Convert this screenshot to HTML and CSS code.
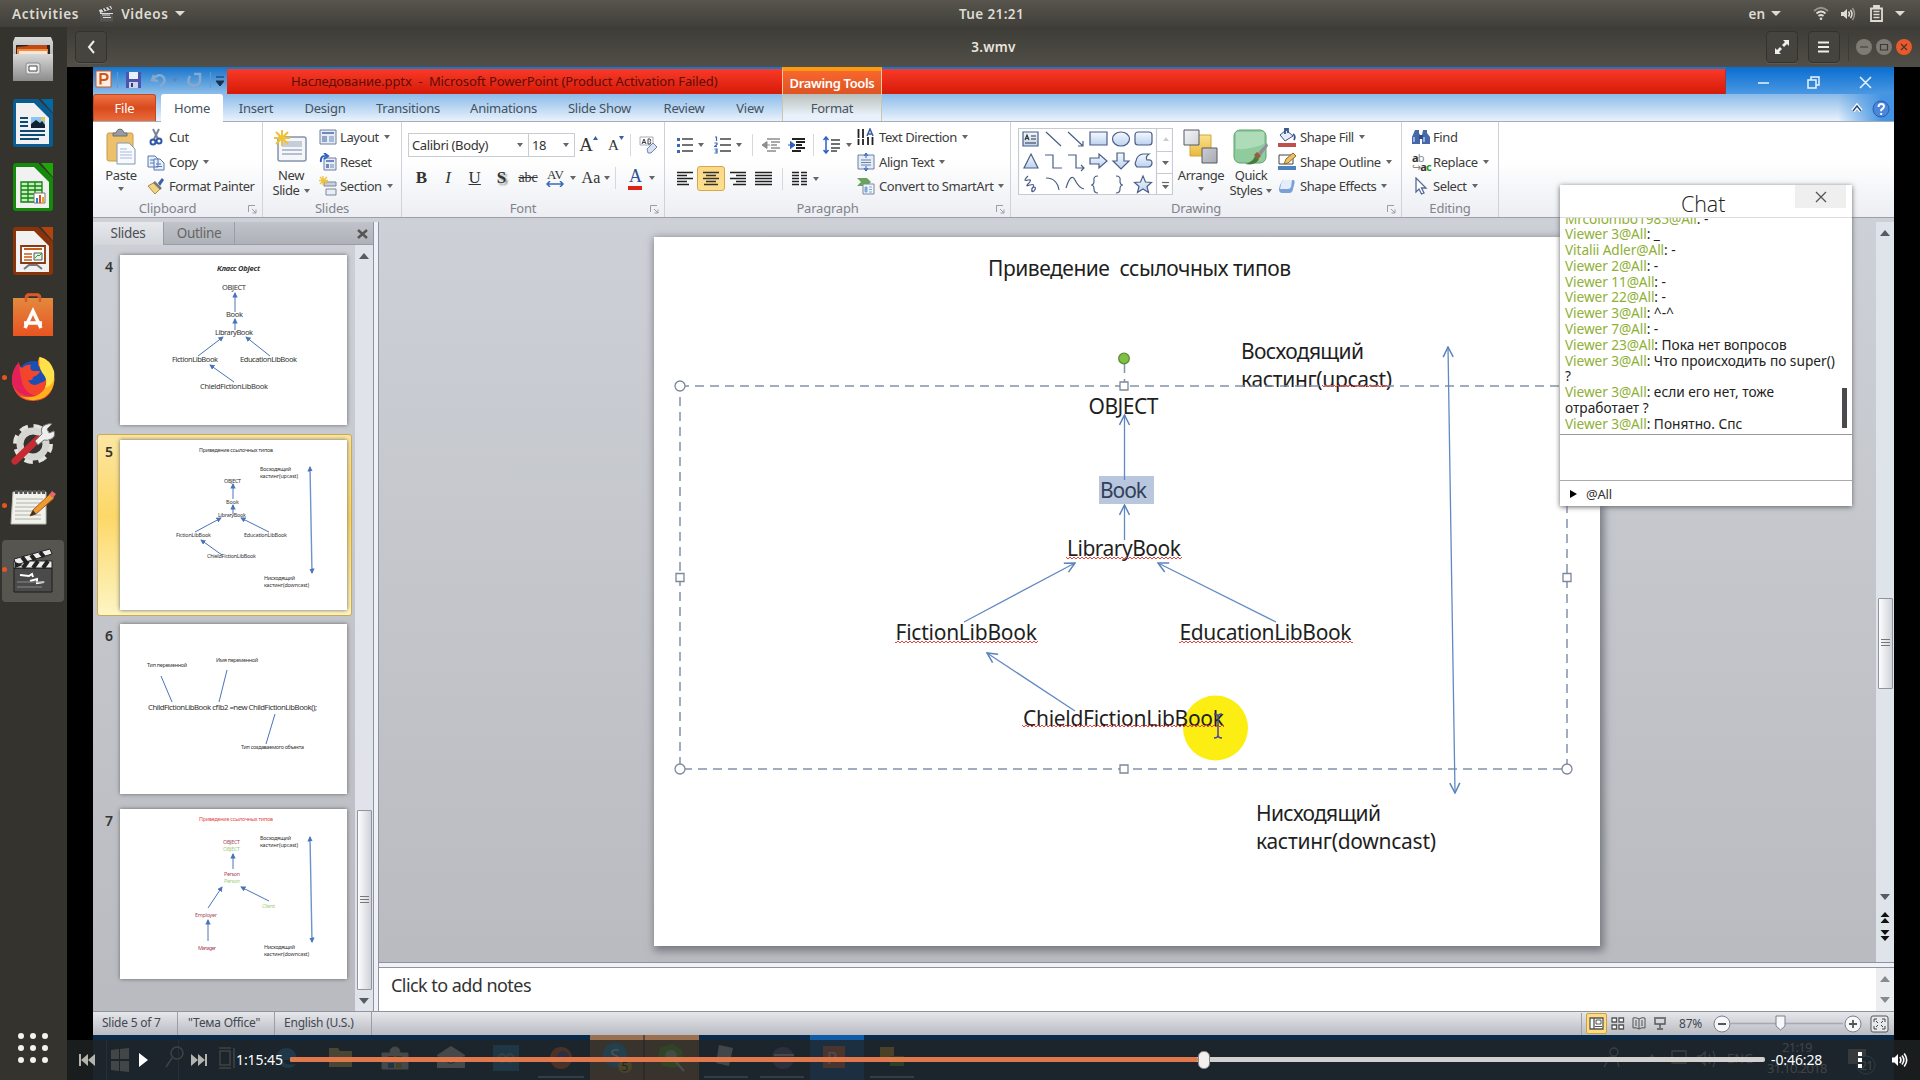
FILE: index.html
```html
<!DOCTYPE html>
<html lang="en">
<head>
<meta charset="utf-8">
<title>3.wmv</title>
<link rel="stylesheet" href="styles.css">
</head>
<body>
<svg class="defs" aria-hidden="true">
  <defs>
    <marker id="open" viewBox="0 0 14 12" refX="13" refY="6" markerWidth="14" markerHeight="12" markerUnits="userSpaceOnUse" orient="auto-start-reverse"><path d="M3 1L13 6L3 11" fill="none" stroke="#5b83bd" stroke-width="1.5"/></marker>
    <marker id="solid" viewBox="0 0 6 6" refX="5" refY="3" markerWidth="5.4" markerHeight="5.4" markerUnits="userSpaceOnUse" orient="auto-start-reverse"><path d="M0 0L6 3L0 6z" fill="#4a74b8"/></marker>
    <pattern id="wave" width="4" height="4" patternUnits="userSpaceOnUse"><path d="M0 3L2 1L4 3" fill="none" stroke="#e8433c" stroke-width="1"/></pattern>
    <linearGradient id="gy" x2="0" y2="1"><stop stop-color="#fae28f"/><stop offset="1" stop-color="#e9b93e"/></linearGradient>
    <linearGradient id="gs" x2="1" y2="1"><stop stop-color="#f4f5f8"/><stop offset="1" stop-color="#a9abb3"/></linearGradient>
    <linearGradient id="gb" x2="0" y2="1"><stop stop-color="#f5f9fe"/><stop offset="1" stop-color="#bcd2f0"/></linearGradient>
    <linearGradient id="gm" x2="0" y2="1"><stop stop-color="#d8d8d8"/><stop offset="1" stop-color="#8c8c8c"/></linearGradient>
    <linearGradient id="go" x2="0" y2="1"><stop stop-color="#e2893f"/><stop offset="1" stop-color="#e95420"/></linearGradient>
  </defs>
</svg>

<header class="topbar">
  <div class="topbar-left"><span class="activities">Activities</span>
    <svg width="15" height="16" viewBox="0 0 15 16"><path d="M0 4L12 0l1 3L1 7z" fill="#ddd"/><path d="M3 2.5l2 3M6 2l2 2M9.500 1l2 2" stroke="#333" stroke-width="1.300"/><path d="M1 7h13v8.500H1z" fill="#555"/><path d="M3 9h8M4 11.500h8M1 7.500h13" stroke="#ddd"/></svg>
    <span>Videos</span><i class="caret light"></i></div>
  <div class="clock">Tue 21:21</div>
  <div class="topbar-right"><span>en</span><i class="caret light"></i>
    <svg class="wifi" width="16" height="15" viewBox="0 0 16 15" fill="none" stroke="#dfdbd2" stroke-width="1.800"><path d="M1 5Q8-1.500 15 5" opacity=".5"/><path d="M3.500 7.500Q8 3.500 12.500 7.500"/><path d="M5.500 10Q8 8 10.500 10"/><circle cx="8" cy="12.800" r="1.300" fill="#dfdbd2" stroke="none"/></svg>
    <svg class="vol" width="16" height="14" viewBox="0 0 16 14" fill="none" stroke="#dfdbd2" stroke-width="1.500"><path d="M1 5h2.500L7 2v10L3.500 9H1z" fill="#dfdbd2" stroke="none"/><path d="M8.500 4.500q2 2.500 0 5M10.500 3q3 4 0 8"/><path d="M12.500 1q4 6 0 12" opacity=".5"/></svg>
    <svg class="bat" width="13" height="17" viewBox="0 0 13 17"><path d="M1 3.500h11v12.500H1zM4 1h5v2H4z" fill="none" stroke="#dfdbd2" stroke-width="1.800"/><path d="M3.500 6.500h6M3.500 9.500h6M3.500 12.500h6" stroke="#dfdbd2" stroke-width="1.600"/></svg>
    <i class="caret light"></i></div>
</header>

<div class="session">
  <nav class="dock">
    <div class="app"><svg width="42" height="46" viewBox="0 0 42 46"><path d="M3 1h36l2 5v38H1V6z" fill="url(#gm)"/><path d="M4 9h34v12H4z" fill="#2c2622"/><path d="M5 11l10-1 2-1h18v12H5z" fill="#c04a14"/><path d="M5 13h31v8H5z" fill="#f08a3c"/><path d="M7 15h28v5H7z" fill="#f6e6d6"/><path d="M1 18h40v27H1z" fill="url(#gm)"/><rect x="14" y="27" width="14" height="11" rx="2" fill="#e4e4e4" stroke="#888"/><path d="M17 30h8v5h-8z" fill="#fff" stroke="#444"/></svg></div>
    <div class="app"><svg width="42" height="50" viewBox="0 0 42 50"><path d="M4 1h22l15 15v30q0 3-3 3H4q-3 0-3-3V4q0-3 3-3z" fill="#0a5d92"/><path d="M4 5h18l15 15v26H4z" fill="#f1f1f1"/><path d="M29 1h12v14z" fill="#0369a3"/><path d="M8 20h8M8 24h8M8 28h8M8 33h25M8 37h25M8 41h19" stroke="#0c4a74" stroke-width="2"/><path d="M19 19h14v11H19z" fill="#8cc6ef"/><path d="M19 30v-4l5-4 4 3 2-2 3 4v3z" fill="#123"/><circle cx="31" cy="21" r="2" fill="#f6c545"/></svg></div>
    <div class="app"><svg width="42" height="50" viewBox="0 0 42 50"><path d="M4 1h22l15 15v30q0 3-3 3H4q-3 0-3-3V4q0-3 3-3z" fill="#138a0a"/><path d="M4 5h18l15 15v26H4z" fill="#f1f1f1"/><path d="M29 1h12v14z" fill="#1fa50a"/><path d="M9 20h21v20H9zM9 24h21M9 28h21M9 32h21M9 36h21M16 20v20M23 20v20" fill="#c5eec0" stroke="#12800c" stroke-width="1.300"/><path d="M22 31h11v10H22z" fill="#fff" stroke="#777"/><path d="M24 36h2v5h-2z" fill="#2a80c8"/><path d="M27 33h2v8h-2z" fill="#e04e16"/><path d="M30 35h2v6h-2z" fill="#f1a21e"/></svg></div>
    <div class="app"><svg width="42" height="50" viewBox="0 0 42 50"><path d="M4 1h22l15 15v30q0 3-3 3H4q-3 0-3-3V4q0-3 3-3z" fill="#8a3208"/><path d="M4 5h18l15 15v26H4z" fill="#f1f1f1"/><path d="M29 1h12v14z" fill="#b3430e"/><path d="M9 20h24v17H9z" fill="#fff" stroke="#8a3a10" stroke-width="1.800"/><path d="M12 23h18" stroke="#c85a1e" stroke-width="2"/><path d="M12 28h8M12 31h8M12 34h8" stroke="#c85a1e" stroke-width="1.500"/><path d="M22 27h8v7h-8z" fill="#e4f4e4" stroke="#555"/><path d="M23 32l3-3 1 1 3-3" stroke="#3a9a2a" fill="none"/><path d="M12 43l5-4h8l5 4" stroke="#777" fill="none" stroke-width="2"/></svg></div>
    <div class="app"><svg width="42" height="44" viewBox="0 0 42 44"><path d="M15 8V4q0-3 3-3h6q3 0 3 3v4" fill="none" stroke="#c4491b" stroke-width="3"/><path d="M1 5h40v38H1z" fill="url(#go)"/><path d="M14 9V4q0-2 3-2h8q3 0 3 2v5" fill="none" stroke="#d95a28" stroke-width="2.500"/><path d="M13 35l8-17 8 17M12 30h18" fill="none" stroke="#fff" stroke-width="3.500"/></svg></div>
    <div class="app running"><svg width="44" height="46" viewBox="0 0 44 46"><circle cx="23" cy="23" r="18" fill="#1a4fb4"/><path d="M27 4q8-4 10 3 8 8 6 20-3 17-20 18Q5 45 1 27 0 15 8 6q0 5 3 6 4-4 9-3-2 5 2 6h7q-1 4-7 6 0 4-5 3 4 8 12 3 8-2 8-9-5-8-10-8z" fill="#f2452c"/><path d="M28 1q9 1 14 14 5 16-8 26Q22 48 9 40q14 4 23-5 6-8 2-15-8-8-6-19z" fill="#ffb21e"/><path d="M29 1q10 2 14 14 2 14-9 17 3-8-1-13-6-8-4-18z" fill="#ffe14a"/><path d="M1 27Q0 15 8 6q0 8 2 15 2 16 15 19-18 2-24-13z" fill="#e3205a"/></svg></div>
    <div class="app"><svg width="44" height="46" viewBox="0 0 44 46"><circle cx="22" cy="24" r="17" fill="none" stroke="#e2e2de" stroke-width="6" stroke-dasharray="8 5.350"/><circle cx="22" cy="24" r="13" fill="none" stroke="#d5d5d2" stroke-width="7"/><path d="M4 41L27 19" stroke="#c62b31" stroke-width="7" stroke-linecap="round"/><path d="M24 21l7-7q-2-7 3-9 4-2 7-1l-5 5 2 4 5-2q2 6-3 8-4 2-7 1l-6 5z" fill="#eee" stroke="#777"/></svg></div>
    <div class="app running"><svg width="46" height="38" viewBox="0 0 46 38"><path d="M3 4h33v32H1z" fill="#f2f2ec" stroke="#b9b9b0"/><path d="M5 4h30" stroke="#555" stroke-width="4" stroke-dasharray="3 1.500"/><path d="M6 11h27M6 15h27M5 19h25M5 23h20M5 27h26M5 31h26" stroke="#b0b0aa"/><path d="M20 28l3-6L40 6l4 4-18 16z" fill="#ef9a33" stroke="#a86018"/><path d="M39 7l3-4 4 3-3 4z" fill="#e06868"/><path d="M20 28l3-6 3 4z" fill="#333"/></svg></div>
    <div class="app running active"><svg width="42" height="46" viewBox="0 0 42 46"><path d="M2 20h38v24H2z" fill="#4a4a4a" stroke="#1d1d1d"/><path d="M2 13h38v7H2z" fill="#eee" stroke="#222"/><path d="M2 11L38 1l2 5L4 17z" fill="#eee" stroke="#222"/><path d="M10 9l4 5M19 7l4 5M28 4l4 5M11 20l5-7M21 20l5-7M31 20l5-7" stroke="#222" stroke-width="4"/><path d="M3 14l8 3-8 3z" fill="#222"/><path d="M8 27l9 1 3-2 1 3M18 33l7-2v4l7-1" stroke="#fff" stroke-width="2" fill="none"/><path d="M5 34h28M5 39h25" stroke="#888"/></svg></div>
    <svg class="apps" width="32" height="32" viewBox="0 0 32 32" fill="#f3f3f1"><circle cx="4" cy="4" r="3"/><circle cx="16" cy="4" r="3"/><circle cx="28" cy="4" r="3"/><circle cx="4" cy="16" r="3"/><circle cx="16" cy="16" r="3"/><circle cx="28" cy="16" r="3"/><circle cx="4" cy="28" r="3"/><circle cx="16" cy="28" r="3"/><circle cx="28" cy="28" r="3"/></svg>
  </nav>

  <main class="player">
    <div class="headerbar">
      <div class="hb-side"><button class="hb-btn"><svg width="10" height="14" viewBox="0 0 10 14"><path d="M8 1L3 7l5 6" fill="none" stroke="#eee" stroke-width="2"/></svg></button></div>
      <h1>3.wmv</h1>
      <div class="hb-side end">
        <button class="hb-btn"><svg width="16" height="16" viewBox="0 0 16 16"><path d="M9 1h6v6l-2-2-3 3-2-2 3-3zM1 9l2 2 3-3 2 2-3 3 2 2H1z" fill="#eee"/></svg></button>
        <button class="hb-btn"><svg width="12" height="12" viewBox="0 0 12 12"><path d="M0 1.500h11M0 6h11M0 10.500h11" stroke="#eee" stroke-width="2.200"/></svg></button>
        <i class="hb-sep"></i>
        <svg width="56" height="18" viewBox="0 0 56 18"><circle cx="8" cy="9" r="8" fill="#7d7b74"/><circle cx="28" cy="9" r="8" fill="#7d7b74"/><circle cx="48" cy="9" r="8" fill="#e9592b"/><path d="M4 9h8M24.500 6.500h7v5.500h-7zM45 6l6 6M51 6l-6 6" fill="none" stroke="#3a3934" stroke-width="1.200"/></svg>
      </div>
    </div>

    <div class="video">
      <div class="ppt">
        <div class="titlebar">
          <div class="qat">
            <svg width="134" height="27" viewBox="0 0 134 27"><path d="M3 4h15v16H3z" fill="#fbeee4" stroke="#c85a28"/><path d="M7.500 17.500V7H11q3.500 0 3.500 3T11 13H8" fill="none" stroke="#d0561e" stroke-width="2.200"/><path d="M24.500 5v16M117.500 5v16" stroke="#5f9ad6"/><path d="M33 5h15v16H33z" fill="#4c55ad"/><path d="M36 5h9v7h-9z" fill="#e9f0fb"/><path d="M36 15h9v6h-9z" fill="#cfd2e6"/><path d="M38 16h2v4h-2z" fill="#333a80"/><path d="M61 8l-2 5 6 1M60 12q7-7 11-1 2 5-4 8" fill="none" stroke="#86a9cf" stroke-width="2.500"/><path d="M79 11h6l-3 4z" fill="#5b87b8"/><path d="M97 9q-4 7 1 9 8 2 9-4V7h-6" fill="none" stroke="#86a9cf" stroke-width="2.500"/><path d="M123 10h8M123 14h8l-4 5z" fill="#173050" stroke="#173050"/></svg>
          </div>
          <div class="redbar"><span class="wintitle">Наследование.pptx &nbsp;- &nbsp;Microsoft PowerPoint (Product Activation Failed)</span><span class="context">Drawing Tools</span></div>
          <div class="winctl"><svg width="168" height="27" viewBox="0 0 168 27" fill="none" stroke="#eaf4ff" stroke-width="1.500"><path d="M32 16h11M82 13h8v8h-8zM85 13v-3h8v8h-3M134 10l11 11M145 10l-11 11"/></svg></div>
        </div>
        <div class="tabs">
          <span class="tab file">File</span><span class="tab home">Home</span><span class="tab t3">Insert</span><span class="tab t4">Design</span><span class="tab t5">Transitions</span><span class="tab t6">Animations</span><span class="tab t7">Slide Show</span><span class="tab t8">Review</span><span class="tab t9">View</span><span class="tab format">Format</span>
          <svg class="help" width="44" height="24" viewBox="0 0 44 24"><path d="M3 15l4-5 4 5" fill="none" stroke="#fff" stroke-width="4"/><path d="M3 15l4-5 4 5" fill="none" stroke="#2b4b78" stroke-width="1.500"/><circle cx="31" cy="13" r="8" fill="#4a86dc" stroke="#2a5cb0"/><path d="M28.500 11q0-3 3-3 2.500 0 2.500 2.500 0 1.500-2.800 3.300v1.500M31.200 17v2" fill="none" stroke="#fff" stroke-width="1.900"/></svg>
        </div>

        <div class="ribbon">
          <section class="group g-clip">
            <div class="gbody">
              <div class="big"><svg width="30" height="36" viewBox="0 0 30 36"><rect x="1" y="4" width="26" height="28" rx="2" fill="#edc16b" stroke="#c99a46"/><path d="M7 7V4h3q1-4 4-4t4 4h3v3z" fill="#9a9ca4" stroke="#6f7178"/><path d="M11 14h12l6 6v15H11z" fill="#f7fafe" stroke="#8596b4"/><path d="M14 20h7M14 23h12M14 26h12M14 29h12" stroke="#a9b9d6"/></svg><span>Paste</span><i class="caret"></i></div>
              <div class="rows">
                <div class="row"><svg width="18" height="18" viewBox="0 0 18 18"><path d="M6 1l5 10M12 1L7 11" stroke="#7a8498" stroke-width="2"/><circle cx="6" cy="14" r="2.500" fill="none" stroke="#2e57a8" stroke-width="2"/><circle cx="12" cy="13" r="2.500" fill="none" stroke="#2e57a8" stroke-width="2"/></svg>Cut</div>
                <div class="row"><svg width="18" height="18" viewBox="0 0 18 18"><path d="M1 3h7l3 3v8H1zM7 6h6l4 4v7H7z" fill="#e7effb" stroke="#5877ab"/><path d="M3 7h4M3 10h4M9 11h5M9 13.500h6" stroke="#4c78c0"/></svg>Copy<i class="caret"></i></div>
                <div class="row"><svg width="18" height="18" viewBox="0 0 18 18"><path d="M11 6l4-5 2 2-4 6z" fill="#3f5ea8"/><path d="M1 9l7-4 6 6-6 6z" fill="#efd483" stroke="#b08c38"/><path d="M7 5l7 7" stroke="#777" stroke-width="2.500"/></svg>Format Painter</div>
              </div>
            </div>
            <div class="glabel">Clipboard<svg class="launch" width="9" height="9" viewBox="0 0 9 9"><path d="M.5 7V.5H7M4 4l4 4M8 4.500V8H4.500" fill="none" stroke="#9a9da6"/></svg></div>
          </section>

          <section class="group g-slides">
            <div class="gbody">
              <div class="big"><svg width="34" height="34" viewBox="0 0 34 34"><rect x="4" y="7" width="28" height="24" rx="2" fill="#f4f6fa" stroke="#8592aa" stroke-width="1.500"/><path d="M8 11h20v6H8z" fill="#c5cddb"/><path d="M8 20h20M8 24h20" stroke="#b5bfd0" stroke-width="2"/><path d="M8 0v16M0 8h16M2 2l12 12M14 2L2 14" stroke="#f1c136" stroke-width="2"/></svg><span>New</span><span>Slide<i class="caret"></i></span></div>
              <div class="rows">
                <div class="row"><svg width="18" height="18" viewBox="0 0 18 18"><path d="M1 2h16v14H1z" fill="#e6ebf4" stroke="#6f7f9d"/><path d="M3 4h12v2H3z" fill="#6d89bd"/><path d="M3 8h5v6H3z" fill="#8fa5cc"/><path d="M10 9h5M10 11h5M10 13h5" stroke="#6d89bd"/></svg>Layout<i class="caret"></i></div>
                <div class="row"><svg width="18" height="18" viewBox="0 0 18 18"><path d="M5 5h12v12H5z" fill="#e6ebf4" stroke="#6f7f9d"/><path d="M7 7h8v2H7zM7 11h3v4H7z" fill="#6d89bd"/><path d="M11 12h4M11 14h4" stroke="#6d89bd"/><path d="M2 9Q1 2 8 3M5 0l4 3-4 3" fill="none" stroke="#2f62c0" stroke-width="2"/></svg>Reset</div>
                <div class="row"><svg width="18" height="20" viewBox="0 0 18 20"><path d="M5 6h12v4H5z" fill="#c8d0dd" stroke="#7b879c"/><path d="M7 13h10v6H7z" fill="#e9edf4" stroke="#7b879c"/><path d="M4 0v9M0 4.500h9M1 1l7 7M8 1L1 8" stroke="#f1c136" stroke-width="1.300"/></svg>Section<i class="caret"></i></div>
              </div>
            </div>
            <div class="glabel">Slides</div>
          </section>

          <section class="group g-font">
            <div class="gbody tools">
              <div class="font-row1">
                <span class="combo">Calibri (Body)<i class="caret"></i></span><span class="combo size">18<i class="caret"></i></span>
                <span class="serif grow">A<svg width="5" height="4" viewBox="0 0 5 4"><path d="M0 4h5L2.500 0z" fill="#3a5ba5"/></svg></span><span class="serif shrink">A<svg width="5" height="4" viewBox="0 0 5 4"><path d="M0 0h5L2.500 4z" fill="#3a5ba5"/></svg></span><i class="vsep"></i>
                <svg width="19" height="20" viewBox="0 0 19 20"><path d="M1 2h13v8H1z" fill="#fff" stroke="#aab"/><path d="M3 9l2-5 2 5M3.500 7.500h3M9 4v5h2q1.500-1.200 0-2.500Q12.500 5 11 4z" fill="none" stroke="#444"/><path d="M8 14l6-6 4 4-6 6H9z" fill="#d9e2f2" stroke="#7085ad"/></svg>
              </div>
              <div class="font-row2">
                <b class="serif">B</b><i class="serif">I</i><u class="serif">U</u><b class="serif shadow">S</b><s class="serif small">abc</s>
                <span class="serif av">AV<svg width="18" height="6" viewBox="0 0 18 6"><path d="M1 3h16M4 0L1 3l3 3M14 0l3 3-3 3" fill="none" stroke="#3c68b8" stroke-width="1.500"/></svg></span><i class="caret"></i>
                <span class="serif aa">Aa</span><i class="caret"></i><i class="vsep"></i><span class="serif color">A</span><i class="caret"></i>
              </div>
            </div>
            <div class="glabel">Font<svg class="launch" width="9" height="9" viewBox="0 0 9 9"><path d="M.5 7V.5H7M4 4l4 4M8 4.500V8H4.500" fill="none" stroke="#9a9da6"/></svg></div>
          </section>

          <section class="group g-para">
            <div class="gbody">
              <div class="tools">
                <div class="para-row1">
                  <span><svg width="16" height="16" viewBox="0 0 16 16"><path d="M5 2h11M5 8h11M5 14h11" stroke="#444" stroke-width="1.500"/><path d="M0 1h3v3H0zM0 7h3v3H0zM0 13h3v3H0z" fill="#3c68b8"/></svg><i class="caret"></i></span>
                  <span><svg width="17" height="18" viewBox="0 0 17 18"><path d="M6 3h11M6 9h11M6 15h11" stroke="#444" stroke-width="1.500"/><path d="M1 1h1.500v4M.500 7h2.500v1.500L.500 10.500H3M.500 13h2.500v4H.500M1 15h2" fill="none" stroke="#3c68b8" stroke-width="1.200"/></svg><i class="caret"></i></span>
                  <i class="vsep"></i>
                  <svg width="18" height="17" viewBox="0 0 18 17"><path d="M5 2h13M9 5h9M9 8h6M9 11h9M5 14h9" stroke="#8d8d8d" stroke-width="1.500"/><path d="M0 8l5-3.500v7zM5 8h3" fill="#8d8d8d" stroke="#8d8d8d"/></svg>
                  <svg width="18" height="17" viewBox="0 0 18 17"><path d="M4 2h13M8 5h9M8 8h6M8 11h9M4 14h9" stroke="#222" stroke-width="1.800"/><path d="M7 8L2.500 4.500v7zM0 8h3" fill="#2f5fc0" stroke="#2f5fc0"/></svg>
                  <i class="vsep"></i>
                  <span><svg width="18" height="18" viewBox="0 0 18 18"><path d="M3 1v16M.500 4L3 1l2.500 3M.500 14L3 17l2.500-3" fill="none" stroke="#2f5fc0" stroke-width="1.500"/><path d="M8 4h9M8 8h9M8 12h9M8 15h6" stroke="#444" stroke-width="1.500"/></svg><i class="caret"></i></span>
                </div>
                <div class="para-row2">
                  <svg width="16" height="15" viewBox="0 0 16 15"><path d="M0 1.500h16M0 4.500h10M0 7.500h16M0 10.500h10M0 13.500h12" stroke="#222" stroke-width="1.600"/></svg>
                  <span class="on"><svg width="16" height="15" viewBox="0 0 16 15"><path d="M0 1.500h16M3 4.500h10M0 7.500h16M3 10.500h10M1 13.500h14" stroke="#333" stroke-width="1.600"/></svg></span>
                  <svg width="16" height="15" viewBox="0 0 16 15"><path d="M0 1.500h16M6 4.500h10M0 7.500h16M6 10.500h10M3 13.500h13" stroke="#222" stroke-width="1.600"/></svg>
                  <svg width="17" height="15" viewBox="0 0 17 15"><path d="M0 1.500h17M0 4.500h17M0 7.500h17M0 10.500h17M0 13.500h17" stroke="#222" stroke-width="1.600"/></svg>
                  <i class="vsep"></i>
                  <span><svg width="16" height="15" viewBox="0 0 16 15"><path d="M0 1.500h7M0 4.500h7M0 7.500h7M0 10.500h7M0 13.500h7M9 1.500h6M9 4.500h6M9 7.500h6M9 10.500h6M9 13.500h6" stroke="#222" stroke-width="1.600"/></svg><i class="caret"></i></span>
                </div>
              </div>
              <div class="rows">
                <div class="row"><svg width="18" height="18" viewBox="0 0 18 18"><path d="M1.500 1v16M6 1v16M11 9v8M15.500 9v8" stroke="#222" stroke-width="1.800" stroke-dasharray="9 1"/><path d="M10 8l3-7 3 7M11 6h4" fill="none" stroke="#3a5ba5" stroke-width="1.500"/></svg>Text Direction<i class="caret"></i></div>
                <div class="row"><svg width="18" height="18" viewBox="0 0 18 18"><path d="M1 2h16v14H1z" fill="#e4edfa" stroke="#6c7f9f"/><path d="M4 7h10M4 9.500h10M4 12h10" stroke="#6c7f9f"/><path d="M9 0v5M9 18v-5M7 3l2-3 2 3M7 15l2 3 2-3" stroke="#2f5fc0" fill="none"/></svg>Align Text<i class="caret"></i></div>
                <div class="row"><svg width="18" height="18" viewBox="0 0 18 18"><path d="M0 1h10l4 4-4 4H0l4-4z" fill="#6aa45c"/><path d="M6 7h11v10H6z" fill="#f2f5f9" stroke="#7887a0"/><path d="M8 10h2v5H8zM12 10h3M12 12.500h3M12 15h3" fill="#7fa6d8" stroke="#7fa6d8"/></svg>Convert to SmartArt<i class="caret"></i></div>
              </div>
            </div>
            <div class="glabel">Paragraph<svg class="launch" width="9" height="9" viewBox="0 0 9 9"><path d="M.5 7V.5H7M4 4l4 4M8 4.500V8H4.500" fill="none" stroke="#9a9da6"/></svg></div>
          </section>

          <section class="group g-draw">
            <div class="gbody">
              <svg class="gallery" width="155" height="67" viewBox="0 0 155 67" fill="none" stroke="#4a5f86" stroke-width="1.200">
                <path d="M.5 .5h154v66H.5z" fill="#fff" stroke="#c7cad2"/><path d="M138.500 0v67M139 23.500h15M139 45.500h15" stroke="#c7cad2"/>
                <path d="M145 13h6l-3-4z" fill="#ccc" stroke="none"/><path d="M144 33h7l-3.500 4zM144 57h7l-3.500 4z" fill="#666" stroke="none"/><path d="M144 54.500h7" stroke="#666"/>
                <path d="M5 4h15v14H5z" fill="url(#gb)"/><path d="M7 12l2-5 2 5M7.500 10.500h3M13 8h5M13 11h5M7 15h11" stroke="#333"/>
                <path d="M28 4l15 14M50 4l15 14M65 13v5h-5"/><path d="M72 4h17v13H72z" fill="url(#gb)"/><ellipse cx="103" cy="11" rx="8.500" ry="7" fill="url(#gb)"/><rect x="117" y="4" width="17" height="13" rx="3" fill="url(#gb)"/>
                <path d="M6 40h14L13 26z" fill="url(#gb)"/><path d="M27 27h8v13h9M50 27h8v13h8M63 37l3 3-3 3"/><path d="M72 30h9v-4l8 7-8 7v-4h-9z" fill="url(#gb)"/><path d="M99 25h7v8h5l-8 8-8-8h4z" fill="url(#gb)"/><path d="M119 39q-3-3-1-6 1-6 7-7h6q-4 3-2 6 5-1 5 3 0 3-3 4z" fill="url(#gb)"/>
                <path d="M10 48q-6 6 0 4 5-1 0 4-3 3 2 1 6-2 2 4-1 4 2 2 3-4 0-4-4 1-1 5M28 50q11 0 13 12M48 60q5-16 9-8t9 9M80 48q-5 0-4 5 0 4-3 4 3 0 3 4 0 4 4 4M98 48q5 0 4 5 0 4 3 4-3 0-3 4 0 4-4 4"/><path d="M125 48l2.500 6 6 .5-4.500 4 1.500 6-5.500-3.500-5.500 3.500 1.500-6-4.500-4 6-.5z" fill="url(#gb)"/>
              </svg>
              <div class="big arrange"><svg width="36" height="36" viewBox="0 0 36 36"><path d="M7 6h21v21H7z" fill="url(#gy)" stroke="#d0a43a"/><path d="M1 1h15v15H1zM19 19h15v15H19z" fill="url(#gs)" stroke="#55585f"/></svg><span>Arrange</span><i class="caret"></i></div>
              <div class="big quick"><svg width="36" height="36" viewBox="0 0 36 36"><rect x="1" y="1" width="32" height="33" rx="6" fill="#8fcb9d" stroke="#5f9f70"/><path d="M3 3h28v12q-14 6-28 5z" fill="#aedcb8"/><path d="M34 14L22 27l3 3 10-13z" fill="#8f8f95"/><path d="M12 35q8-2 10-8l4 3q-3 7-14 5z" fill="#477c3e"/><path d="M21 26l3-3 4 4-3 3z" fill="#9c5c38"/></svg><span>Quick</span><span>Styles<i class="caret"></i></span></div>
              <div class="rows">
                <div class="row"><svg width="18" height="19" viewBox="0 0 18 19"><path d="M8 2l7 6-8 5-5-6z" fill="#e8edf6" stroke="#3a5590"/><path d="M7 6V1h3v4M15 6q3 2 1 6" fill="none" stroke="#3a5590" stroke-width="1.800"/><path d="M0 15h18v4H0z" fill="#c0504d"/></svg>Shape Fill<i class="caret"></i></div>
                <div class="row"><svg width="18" height="19" viewBox="0 0 18 19"><path d="M1 3h14v9H1z" fill="#fff" stroke="#444"/><path d="M6 12l2-5 7-6 3 3-8 7z" fill="#f0c066" stroke="#8f6a2a"/><path d="M0 14h18v4H0z" fill="#4f81bd"/></svg>Shape Outline<i class="caret"></i></div>
                <div class="row"><svg width="18" height="19" viewBox="0 0 18 19"><path d="M2 8l3-5h10q2 0 1.500 3l-2 8q-1 2-3 2H4q-3 0-3-4z" fill="#7ba0d8"/><path d="M3 7l2-4h9l-1 7q-1 2-3 2H2z" fill="#e4eefb"/></svg>Shape Effects<i class="caret"></i></div>
              </div>
            </div>
            <div class="glabel">Drawing<svg class="launch" width="9" height="9" viewBox="0 0 9 9"><path d="M.5 7V.5H7M4 4l4 4M8 4.500V8H4.500" fill="none" stroke="#9a9da6"/></svg></div>
          </section>

          <section class="group g-edit">
            <div class="gbody">
              <div class="rows">
                <div class="row"><svg width="18" height="16" viewBox="0 0 18 16"><path d="M3 1h4v3l1 2v9H0V8zM11 1h4v3l3 4v7h-8V6z" fill="#4667a8"/><path d="M7 6h4v4H7z" fill="#2f4c86"/><path d="M2 8v5M12 8v5" stroke="#b5caf0" stroke-width="1.500"/></svg>Find</div>
                <div class="row"><span class="abac"><b>a</b>b<br>↪<b>a</b><em>c</em></span>Replace<i class="caret"></i></div>
                <div class="row"><svg width="18" height="18" viewBox="0 0 18 18"><path d="M4 1v14l3-3 2.500 5 2.500-1-2.500-5H14z" fill="#fff" stroke="#55699a" stroke-width="1.300"/></svg>Select<i class="caret"></i></div>
              </div>
            </div>
            <div class="glabel">Editing</div>
          </section>
        </div>

        <div class="work">
          <aside class="nav">
            <div class="nav-tabs"><span class="on">Slides</span><span class="off">Outline</span><svg width="11" height="10" viewBox="0 0 11 10"><path d="M1 1l9 8M10 1L1 9" stroke="#555" stroke-width="2.400"/></svg></div>
            <div class="nav-body">
              <ol class="thumbs">
                <li><b>4</b><svg class="mini" width="227" height="170" viewBox="0 0 227 170">
                  <text x="97" y="16" textLength="43" font-weight="700" font-style="italic">Класс Object</text><text x="102" y="35" textLength="24">OBJECT</text><text x="106" y="62" textLength="17">Book</text><text x="95" y="80" textLength="38">LibraryBook</text><text x="52" y="107" textLength="46">FictionLibBook</text><text x="120" y="107" textLength="57">EducationLibBook</text><text x="80" y="134" textLength="68">ChieldFictionLibBook</text>
                  <path d="M115 57V38"/><path d="M115 75V64"/><path d="M78 101L103 82"/><path d="M150 101L126 82"/><path d="M114 127L90 110"/></svg></li>
                <li class="sel"><b>5</b><svg class="mini tiny" width="227" height="170" viewBox="0 0 227 170">
                  <text x="79" y="12" textLength="74">Приведение ссылочных типов</text><text x="140" y="31" textLength="31">Восходящий</text><text x="140" y="38" textLength="38">кастинг(upcast)</text><text x="104" y="43" textLength="17">OBJECT</text><text x="106" y="64" textLength="13">Book</text><text x="98" y="77" textLength="28">LibraryBook</text><text x="56" y="97" textLength="35">FictionLibBook</text><text x="124" y="97" textLength="43">EducationLibBook</text><text x="87" y="118" textLength="49">ChieldFictionLibBook</text><text x="144" y="140" textLength="31">Нисходящий</text><text x="144" y="147" textLength="45">кастинг(downcast)</text>
                  <path d="M113 59V44"/><path d="M113 74V65"/><path d="M75 92L101 78"/><path d="M149 92L121 78"/><path d="M102 115L81 100"/><path class="both" d="M190 27L192 133"/></svg></li>
                <li><b>6</b><svg class="mini tiny plain" width="227" height="170" viewBox="0 0 227 170">
                  <text x="27" y="43" textLength="40">Тип переменной</text><text x="96" y="37.500" textLength="42">Имя переменной</text><text class="code" x="28" y="86" textLength="169">ChildFictionLibBook cflb2 =new ChildFictionLibBook();</text><text x="121" y="125" textLength="63">Тип создаваемого объекта</text>
                  <path d="M41 52L52 78"/><path d="M107 46L99 78"/><path d="M155 90L146 120"/></svg></li>
                <li><b>7</b><svg class="mini tiny" width="227" height="170" viewBox="0 0 227 170">
                  <text class="red" x="79" y="12" textLength="74">Приведение ссылочных типов</text><text x="140" y="31" textLength="31">Восходящий</text><text x="140" y="38" textLength="38">кастинг(upcast)</text><text class="maroon" x="103" y="35" textLength="17">OBJECT</text><text class="green" x="103" y="42" textLength="17">OBJECT</text><text class="maroon" x="104" y="67" textLength="16">Person</text><text class="green" x="104" y="74" textLength="16">Person</text><text class="maroon" x="75" y="108" textLength="22">Employer</text><text class="green" x="142" y="99" textLength="13">Client</text><text class="maroon" x="78" y="141" textLength="18">Manager</text><text x="144" y="140" textLength="31">Нисходящий</text><text x="144" y="147" textLength="45">кастинг(downcast)</text>
                  <path d="M113 60V45"/><path d="M88 99L102 78"/><path d="M149 92L121 78"/><path d="M88 132V111"/><path class="both" d="M190 28L192 133"/></svg></li>
              </ol>
              <div class="nav-scroll"><i class="up"></i><div class="grip"><i></i></div><i class="down"></i></div>
            </div>
          </aside>

          <div class="edit">
            <div class="stage">
              <svg class="slide" width="946" height="709" viewBox="654 237 946 709">
                <g class="txt">
                  <text x="988" y="276" textLength="303">Приведение&#160; ссылочных типов</text>
                  <text x="1241" y="359" textLength="123">Восходящий</text><text x="1241" y="387" textLength="151">кастинг(upcast)</text>
                  <path class="frame" d="M680 386H1567V769H680z"/>
                  <text x="1088.500" y="414" textLength="70">OBJECT</text>
                  <path d="M1099 476h55v28h-55z" fill="#b9c7de"/>
                  <text x="1100" y="498" textLength="47" class="dim">Book</text>
                  <text x="1067" y="555.500" textLength="114">LibraryBook</text>
                  <text x="895.500" y="640" textLength="141.500">FictionLibBook</text>
                  <text x="1179.500" y="640" textLength="172">EducationLibBook</text>
                  <circle cx="1215.500" cy="728" r="32.500" fill="#fcee12"/>
                  <text x="1023" y="725.500" textLength="201">ChieldFictionLibBook</text>
                  <text x="1256" y="820.500" textLength="125">Нисходящий</text><text x="1256" y="848.500" textLength="180">кастинг(downcast)</text>
                </g>
                <g fill="url(#wave)"><rect x="1066" y="556" width="116" height="4"/><rect x="895" y="640" width="143" height="4"/><rect x="1179" y="640" width="174" height="4"/><rect x="1022" y="724" width="202" height="4"/><rect x="1322" y="384" width="66" height="4"/></g>
                <g class="arrows"><path d="M1124.500 480V415"/><path d="M1124.500 540V505"/><path d="M964 622L1075 563"/><path d="M1276 622L1158 563"/><path d="M1075 711L987 653"/><path class="both" d="M1448 347L1455 793"/></g>
                <path d="M1124.500 364v18" class="frame"/>
                <path d="M1214 714q4 0 4 3 0-3 4-3M1218 717v19M1214 738q4 0 4-3 0 3 4 3" fill="none" stroke="#4b48a0" stroke-width="1.500"/>
                <g fill="#fff" stroke="#7c8798" stroke-width="1.300"><circle cx="680" cy="386" r="5"/><circle cx="680" cy="769" r="5"/><circle cx="1567" cy="769" r="5"/><path d="M1120 382h8v8h-8zM1120 765h8v8h-8zM676 573.500h8v8h-8zM1563 573.500h8v8h-8z"/><circle cx="1124" cy="358.500" r="5.300" fill="#7cc142" stroke="#5d8a3c"/></g>
              </svg>
              <div class="vscroll"><i class="up"></i><div class="grip"><i></i></div><i class="down"></i>
                <svg width="18" height="40" viewBox="0 0 18 40" fill="#111"><path d="M4.500 9h9l-4.500-5zM4.500 15h9l-4.500-5zM4.500 22h9l-4.500 5zM4.500 28h9l-4.500 5z"/></svg></div>
            </div>
            <div class="notes"><span>Click to add notes</span><div class="notes-scroll"><i class="up"></i><i class="down"></i></div></div>
          </div>
        </div>

        <footer class="status">
          <span class="s1">Slide 5 of 7</span><span class="s2">"Тема Office"</span><span class="s3">English (U.S.)</span>
          <div class="views">
            <span class="on"><svg width="15" height="13" viewBox="0 0 15 13"><path d="M1 1h13v11H1zM5 1v11" fill="#fff" stroke="#555" stroke-width="1.300"/><path d="M7 3h5v4H7zM6 9.500h7" fill="none" stroke="#555"/></svg></span>
            <svg width="14" height="13" viewBox="0 0 14 13"><path d="M1 1h4.500v4H1zM8 1h4.500v4H8zM1 8h4.500v4H1zM8 8h4.500v4H8z" fill="#fff" stroke="#555" stroke-width="1.300"/></svg>
            <svg width="14" height="13" viewBox="0 0 14 13"><path d="M7 2Q4 0 1 1v10q3-1 6 1 3-2 6-1V1q-3-1-6 1v10M3 4h2M3 6h2M3 8h2M9 4h2M9 6h2M9 8h2" fill="none" stroke="#555"/></svg>
            <svg width="14" height="13" viewBox="0 0 14 13"><path d="M1 1h12M2 2v5h10V2M7 7v4M4 12h6" fill="none" stroke="#555" stroke-width="1.400"/></svg>
            <span class="pct">87%</span>
            <svg class="zoom" width="178" height="22" viewBox="0 0 178 22"><path d="M18 10.500h112" stroke="#a5a9b3" stroke-width="1.500"/><g fill="#f6f7f9" stroke="#7c808a"><circle cx="9" cy="11" r="8"/><circle cx="140" cy="11" r="8"/><path d="M63 3h9v10l-4.500 4-4.500-4z"/></g><path d="M5 11h8M136 11h8M140 7v8" stroke="#555" stroke-width="1.800"/><rect x="158" y="3" width="17" height="16" rx="2" fill="#e6e8ec" stroke="#555"/><path d="M161 9V6h3M169 6h3v3M172 13v3h-3M164 16h-3v-3M163 8l2 2M170 8l-2 2M163 14l2-2M170 14l-2-2" fill="none" stroke="#444"/></svg>
          </div>
        </footer>

        <div class="taskbar">
          <svg width="1801" height="45" viewBox="93 1035 1801 45">
            <path d="M590 1035h109v45H590z" fill="#9a7050"/><path d="M644 1035v45" stroke="#4c3a30" stroke-width="1.500"/><path d="M810 1035h54v45h-54z" fill="#0e5ca8"/>
            <path d="M106.500 1040v40M178.500 1040v40" stroke="#6f8090" opacity=".5"/>
            <path d="M538 1077h46M704 1077h44M760 1077h44M870 1077h44" stroke="#7aa0c8" stroke-width="2"/>
            <path d="M111 1050l8-1v10h-8zM120 1049l9-1v11h-9zM111 1061h8v10l-8-1zM120 1061h9v11l-9-1z" fill="#ccc"/>
            <circle cx="177" cy="1053" r="6" fill="none" stroke="#bbb" stroke-width="1.500"/><path d="M172 1058l-6 9M220 1051h10v14h-10zM219 1048h12M219 1068h12M234 1048v20" fill="none" stroke="#bbb" stroke-width="1.500"/>
            <path d="M276 1058q2-10 10-10 10 0 11 12h-14q1 6 13 4-3 4-9 4-10-2-8-11z" fill="#1a8ae0"/>
            <path d="M329 1048h9l2 3h12v16h-23z" fill="#e8cc70"/><path d="M382 1053h26v16h-26zM390 1053q0-6 5-6t5 6" fill="#ddd" stroke="#ccc"/><path d="M388 1056h6v5h-6z" fill="#c44"/><path d="M396 1056h6v5h-6z" fill="#4a4"/><path d="M388 1063h6v5h-6z" fill="#36c"/><path d="M396 1063h6v5h-6z" fill="#cb3"/>
            <path d="M437 1055l14-9 14 9v13h-28z" fill="#ddd"/><path d="M437 1056l14 8 14-8" fill="none" stroke="#555"/><path d="M493 1045h26v26h-26z" fill="#1c7cc0"/><path d="M498 1058q4-8 8 0 4 8 8 0-4-8-8 0-4 8-8 0" fill="none" stroke="#6bd" stroke-width="2"/>
            <circle cx="561" cy="1058" r="11" fill="#f0702a"/><circle cx="563" cy="1057" r="6" fill="#4a60c8"/><circle cx="615" cy="1055" r="12" fill="#28b0f0"/><text x="610" y="1062" fill="#fff" font-size="18">S</text><circle cx="625" cy="1066" r="7" fill="#f0c040"/><text x="621.500" y="1071" fill="#222" font-size="12">5</text>
            <path d="M660 1048l12-4 10 6 1 10-8 8-12-2-5-8z" fill="#6bc82a"/><circle cx="671" cy="1056" r="6" fill="#cde8c0"/><path d="M675 1061l9 10" stroke="#eee" stroke-width="2"/><path d="M719 1045l14 3-4 18-13-3z" fill="#c8d4da"/><circle cx="783" cy="1058" r="11" fill="#5a5a98"/><path d="M774 1055h20M774 1060h20" stroke="#ddd" stroke-width="2"/><path d="M823 1046h22v22h-22z" fill="#f07a50"/><text x="827" y="1064" fill="#fff" font-size="17">P</text><path d="M880 1047h14v12h-14z" fill="#e8b830"/><path d="M890 1056h14v10h-14z" fill="#60a828"/>
            <g fill="none" stroke="#aaa" stroke-width="1.300"><circle cx="1614" cy="1052" r="4"/><path d="M1604 1067l6-10h6l3 10M1648 1060l4-5 4 5M1672 1051h14v12h-14zM1698 1056h3l4-4v13l-4-4h-3zM1709 1054q3 5 0 10M1713 1051q4 8 0 16"/></g>
            <path d="M1848 1049h18v15h-18z" fill="#aaa" opacity=".8"/><circle cx="1866" cy="1065" r="9" fill="#0a2a47" stroke="#4a9ac0"/>
            <g fill="#bbb" font-size="13"><text x="1727" y="1063" textLength="26">ENG</text><text x="1782" y="1052" textLength="30">21:19</text><text x="1767" y="1073" textLength="60">31.10.2018</text><text x="1860" y="1070" font-size="12">21</text></g>
          </svg>
        </div>
      </div>

      <section class="chat">
        <div class="chat-head"><span>Chat</span><button><svg width="12" height="12" viewBox="0 0 12 12"><path d="M1 1l10 10M11 1L1 11" stroke="#555" stroke-width="1.300"/></svg></button></div>
        <div class="log">
          <p><em>Mrcolombo1985@All</em>: -</p><p><em>Viewer 3@All</em>: _</p><p><em>Vitalii Adler@All</em>: -</p><p><em>Viewer 2@All</em>: -</p><p><em>Viewer 11@All</em>: -</p><p><em>Viewer 22@All</em>: -</p><p><em>Viewer 3@All</em>: ^-^</p><p><em>Viewer 7@All</em>: -</p><p><em>Viewer 23@All</em>: Пока нет вопросов</p><p><em>Viewer 3@All</em>: Что происходить по super()<br>?</p><p><em>Viewer 3@All</em>: если его нет, тоже<br>отработает ?</p><p><em>Viewer 3@All</em>: Понятно. Спс</p>
          <i class="log-thumb"></i>
        </div>
        <div class="entry"></div>
        <div class="to"><i></i>@All</div>
      </section>

      <div class="controls">
        <svg class="c-btns" width="142" height="20" viewBox="0 0 142 20"><g fill="#b5b3ae"><path d="M12 4h2v12h-2zM21 4v12l-7-6zM28 4v12l-7-6z"/><path d="M124 4v12l7-6zM131 4v12l7-6zM138 4h2v12h-2z"/></g><path d="M72 3v14l9-7z" fill="#fff"/></svg>
        <span class="time">1:15:45</span>
        <div class="seek"><div class="played"></div><svg width="12" height="18" viewBox="0 0 12 18"><rect x=".5" y=".5" width="11" height="17" rx="5" fill="#f2f1f0" stroke="#8a8a85"/></svg></div>
        <span class="time rest">-0:46:28</span>
        <svg class="dots" width="4" height="18" viewBox="0 0 4 18"><path d="M0 1h4v4H0zM0 7h4v4H0zM0 13h4v4H0z" fill="#fff"/></svg>
        <svg class="c-vol" width="17" height="16" viewBox="0 0 17 16" fill="none" stroke="#fff" stroke-width="1.600"><path d="M1 5.500h2.500L7 2v12l-3.500-3.500H1z" fill="#fff" stroke="none"/><path d="M8.800 5q2.200 3 0 6M11 3.500q3.600 4.500 0 9M13.200 1.500q5 6.500 0 13"/></svg>
      </div>
    </div>
  </main>
</div>
</body>
</html>
```
FILE: styles.css
```css
* { box-sizing: border-box; }
body { margin: 0; width: 1920px; height: 1080px; overflow: hidden; background: #000; font-family: "Noto Sans", sans-serif; font-size: 13px; color: #3c3c3c; display: flex; flex-direction: column; }
svg { display: block; flex: none; }
span, p { white-space: nowrap; }
.defs { position: absolute; width: 0; height: 0; }
button { border: 0; padding: 0; background: none; display: flex; align-items: center; justify-content: center; }
.caret { display: inline-block; flex: none; width: 0; height: 0; border: 3.5px solid transparent; border-top: 4px solid #666; border-bottom: 0; }
.caret.light { border-width: 5px; border-top-width: 5px; border-top-color: #dfdbd2; border-bottom: 0; }
.up, .down { width: 0; height: 0; border: 5px solid transparent; flex: none; }
.up { border-bottom: 6px solid #555a63; border-top: 0; }
.down { border-top: 6px solid #555a63; border-bottom: 0; }
.vsep { width: 1px; height: 22px; background: #d6d8de; }

/* desktop panel */
.topbar { height: 27px; flex: none; display: flex; align-items: center; background: linear-gradient(#57554c, #403f3a); color: #dfdbd2; font-weight: 600; font-size: 13.5px; padding: 0 15px 0 12px; }
.topbar-left, .topbar-right { flex: 1; display: flex; align-items: center; }
.topbar-right { justify-content: flex-end; }
.activities { margin-right: 20px; letter-spacing: .7px; }
.topbar-left svg { margin-right: 7px; }
.topbar .caret { margin-left: 6px; }
.activities + svg + span { letter-spacing: .6px; }
.clock { margin-left: 66px; width: 70px; text-align: center; letter-spacing: .4px; white-space: nowrap; }
.wifi { margin-left: 32px; }
.vol { margin-left: 11px; }
.bat { margin: 0 6px 0 14px; }

.session { flex: 1; display: flex; }
.dock { width: 67px; padding-right: 1px; background: #34332e; display: flex; flex-direction: column; align-items: center; }
.app { width: 62px; height: 62px; margin: 1px 0; display: flex; align-items: center; justify-content: center; border-radius: 4px; position: relative; }
.app.active { background: #56554f; }
.app.running::before { content: ""; position: absolute; left: 0; top: 27px; width: 5px; height: 5px; border-radius: 50%; background: #e95420; }
.apps { margin-top: auto; margin-bottom: 16px; }

.player { flex: 1; display: flex; flex-direction: column; }
.headerbar { height: 40px; display: flex; align-items: center; background: linear-gradient(#3d3c37, #514f47); color: #e8e5de; padding: 0 8px; }
.headerbar h1 { margin: 0; font-size: 13.5px; font-weight: 600; width: 60px; text-align: center; letter-spacing: .3px; }
.hb-side { flex: 1; display: flex; align-items: center; }
.hb-side.end { justify-content: flex-end; gap: 10px; }
.hb-btn { width: 32px; height: 32px; border: 1px solid #33322d; border-radius: 4px; background: #45443e; box-shadow: 0 1px 0 #5b5952; }
.hb-sep { width: 1px; height: 28px; background: #3b3a35; margin: 0 -3px 0 -2px; }

.video { flex: 1; background: #000; position: relative; padding: 0 26px; }
.ppt { width: 1801px; height: 1013px; display: flex; flex-direction: column; letter-spacing: -.42px; background: #c2c5cb; }

/* window title and ribbon tabs */
.titlebar { height: 27px; display: flex; background: linear-gradient(#1573cf, #7db4e8); }
.titlebar .qat { width: 134px; background: linear-gradient(#1774ca, #8dbeea); }
.redbar { width: 1499px; margin-top: 2px; height: 25px; display: flex; background: linear-gradient(#f93a28, #d61a08); color: #5e0d08; border-right: 1px solid #a33; }
.wintitle { width: 555px; padding: 2px 0 0 64px; letter-spacing: -.1px; line-height: 20px; }
.context { width: 100px; margin-top: -2px; border-top: 4px solid #fa9b12; border-left: 1px solid #fbc9a0; border-right: 1px solid #fbc9a0; background: linear-gradient(#f9662e, #dd5423); color: #fff; font-weight: 600; text-align: center; line-height: 25px; letter-spacing: -.35px; }
.winctl { flex: 1; background: linear-gradient(#0a6dd0, #4a98e2); }
.tabs { height: 28px; display: flex; align-items: flex-end; background: linear-gradient(90deg, transparent 1745px, #4394e2 1790px), linear-gradient(#8bbbe9, #e9f2fc); border-bottom: 1px solid #a4aebb; color: #45525f; letter-spacing: -.25px; }
.tab { height: 27px; line-height: 29px; text-align: center; }
.tab.file { width: 63px; background: linear-gradient(#ee7444, #d84a1e 50%, #ea6c3c); color: #fff; border: 1px solid #c2491f; border-bottom: 0; border-radius: 3px 3px 0 0; line-height: 27px; margin-right: 5px; }
.tab.home { width: 62px; background: #fff; border-radius: 3px 3px 0 0; height: 28px; margin-bottom: -1px; }
.tab.t3 { width: 66px; }
.tab.t4 { width: 72px; }
.tab.t5 { width: 94px; }
.tab.t6 { width: 97px; }
.tab.t7 { width: 95px; }
.tab.t8 { width: 74px; }
.tab.t9 { width: 58px; }
.tab.format { width: 100px; margin-left: 3px; background: linear-gradient(#b9c0bb, #e9f2fc 80%); border-left: 1px solid #c9c5ae; border-right: 1px solid #c9c5ae; }
.help { margin-left: auto; margin-bottom: 1px; }

.ribbon { height: 96px; display: flex; background: linear-gradient(#fff 40%, #eceef3); border-bottom: 1px solid #9da0a7; }
.group { display: flex; flex-direction: column; border-right: 1px solid #cfd2d8; }
.g-clip { width: 170px; }
.g-slides { width: 139px; }
.g-font { width: 263px; }
.g-para { width: 346px; }
.g-draw { width: 391px; }
.g-edit { width: 97px; }
.gbody { height: 77px; display: flex; }
.glabel { height: 18px; line-height: 18px; text-align: center; color: #80838b; position: relative; letter-spacing: -.2px; padding-right: 20px; }
.g-slides .glabel, .g-edit .glabel { padding-right: 0; }
.launch { position: absolute; right: 5px; top: 6px; }
.rows { padding-top: 3px; }
.row { height: 24.600px; display: flex; align-items: center; white-space: nowrap; }
.row svg { margin-right: 4px; }
.caret { margin-left: 5px; }
.big { display: flex; flex-direction: column; align-items: center; padding-top: 6px; line-height: 15px; }
.big > span { display: flex; align-items: center; }
.big span .caret { margin-left: 4px; }
.big > .caret { margin: 4px 0 0; }
.big > svg { height: 38px; margin-bottom: 2px; }
.g-clip .big { width: 56px; }
.g-clip .rows { margin-left: -2px; }
.g-slides .big { width: 56px; }
.g-slides .row svg { margin-right: 3px; }
.tools { flex-direction: column; padding: 11px 0 0 6px; gap: 9px; }
.gbody > .tools { display: flex; width: 192px; padding-left: 12px; }
.font-row1 { height: 24px; display: grid; grid-template-columns: 121px 46px 27px 28px 9px auto; align-items: center; }
.combo { height: 24px; border: 1px solid #c9ccd3; background: #fff; display: flex; align-items: center; justify-content: space-between; padding: 0 5px 0 3px; letter-spacing: -.35px; color: #333; }
.combo.size { margin-left: -1px; }
.serif { font-family: "Liberation Serif", serif; font-size: 17px; color: #333; letter-spacing: 0; text-align: center; line-height: 24px; }
.grow, .shrink { display: flex; justify-content: center; font-size: 19px; }
.shrink { font-size: 15px; }
.serif.grow > svg, .serif.shrink > svg { margin-top: 3px; }
.font-row2 { height: 24px; display: grid; grid-template-columns: repeat(5, 26.700px) 28px 9px 25px 12px 5px 28px 12px; align-items: center; }
.font-row2 .caret { margin-left: 1px; }
.font-row2 b { font-weight: 700; }
.font-row2 .shadow { text-shadow: 2px 2px 2px #888; }
.small { font-size: 14px; }
.av { font-size: 13px; line-height: 12px; display: flex; flex-direction: column; align-items: center; }
.aa { font-size: 16px; }
.color { line-height: 17px; height: 23px; border-bottom: 4px solid #dd2018; margin: 0 6px 0 8px; font-size: 18px; color: #2f4f96; padding-top: 1px; }
.para-row1, .para-row2 { height: 24px; display: grid; align-items: center; }
.para-row1 { grid-template-columns: 37px 38px 10px 26px 25px 10px auto; }
.para-row2 { grid-template-columns: 20px 33px 25px 27px 10px auto; }
.para-row1 span, .para-row2 span { display: flex; align-items: center; }
.para-row2 .on { width: 28px; height: 25px; background: linear-gradient(#fbd98a, #fbe08e); border: 1px solid #d8a848; border-radius: 3px; justify-content: center; }
.gallery { margin: 6px 0 0 7px; }
.arrange { width: 54px; margin-left: 1px; }
.quick { width: 46px; }
.g-draw .rows { margin-left: 4px; }
.g-edit .rows { margin-left: 10px; }
.g-edit .row svg { margin-right: 3px; }
.abac { width: 18px; margin-right: 3px; font-size: 11px; line-height: 9px; letter-spacing: -.8px; color: #888; }
.abac b { color: #333; }
.abac em { color: #2a9a2a; font-style: normal; font-weight: 700; }

/* slides pane */
.work { height: 793px; display: flex; background: linear-gradient(#cdd0d6, #b9bbc0); padding-top: 4px; }
.nav { width: 281px; display: flex; flex-direction: column; border-right: 1px solid #8f939b; }
.nav-tabs { height: 23px; display: flex; align-items: center; background: linear-gradient(#c0c3c9, #aeb1b8); font-size: 13.500px; border-bottom: 1px solid #999da5; color: #4b4e55; letter-spacing: -.3px; }
.nav-tabs span { line-height: 23px; height: 23px; border-right: 1px solid #999da5; text-align: center; }
.nav-tabs .on { width: 71px; background: linear-gradient(#e6e8ec, #d3d6db); }
.nav-tabs .off { width: 71px; color: #666; }
.nav-tabs svg { margin: 2px 5px 0 auto; }
.nav-body { flex: 1; display: flex; }
.thumbs { list-style: none; margin: 0; padding: 4px 0 0 4px; width: 262px; font-size: 14px; color: #333; }
.thumbs li { height: 182px; margin-bottom: 2.700px; padding: 5px 0 0 7px; width: 255px; display: flex; line-height: 24px; border: 1px solid transparent; border-radius: 3px; }
.thumbs b { width: 15px; font-weight: 600; }
.thumbs .sel { background: linear-gradient(#fbe6a2, #fdd868 45%, #fdf5c4); border-color: #cfa94e; }
.mini { background: #fff; box-shadow: 0 0 4px #666; font-size: 7.500px; }
.mini.tiny { font-size: 5.400px; }
.mini text { fill: #333; letter-spacing: 0; }
.mini .code { font-size: 7.800px; }
.mini .red { fill: #e34a4a; }
.mini .maroon { fill: #a84a5a; }
.mini .green { fill: #a3cf7d; }
.mini path { stroke: #4a74b8; stroke-width: 1; marker-end: url(#solid); }
.mini.plain path { marker-end: none; }
.mini .both { marker-start: url(#solid); stroke: #6d93cf; stroke-width: 1.400; }
.nav-scroll { width: 18px; background: #e0e4ea; display: flex; flex-direction: column; align-items: center; padding: 8px 0 7px; }
.nav-scroll .grip { margin-top: auto; height: 180px; width: 15px; margin-bottom: 8px; }
.grip { border: 1px solid #8f949e; border-radius: 1px; background: linear-gradient(90deg, #fdfdfe, #cfd2d9); display: flex; align-items: center; justify-content: center; }
.grip i { width: 9px; height: 9px; background: repeating-linear-gradient(#777 0 1px, transparent 1px 3px); }

/* slide editor */
.edit { flex: 1; margin-left: 4px; border-left: 1px solid #8f939b; display: flex; flex-direction: column; background: #eef1f7; box-shadow: -4px 0 0 #eef1f7; }
.stage { height: 741px; display: flex; padding: 15px 0 0 275px; background: linear-gradient(#cdd0d6, #b9bbc0); border-bottom: 1px solid #8f939b; }
.slide { background: #fff; box-shadow: 2px 3px 8px 2px #777a80; }
.slide text { font-size: 21px; fill: #1f1f1f; letter-spacing: 0; }
.slide .dim { fill: #33405a; }
.frame { fill: none; stroke: #8392aa; stroke-width: 1.500; stroke-dasharray: 9 6; }
.arrows path { stroke: #6189c2; stroke-width: 1.300; marker-end: url(#open); }
.arrows .both { marker-start: url(#open); }
.vscroll { margin: -15px 0 0 auto; width: 18px; background: #dfe3ea; display: flex; flex-direction: column; align-items: center; padding-top: 8px; }
.vscroll .grip { height: 91px; width: 15px; margin-top: 362px; }
.vscroll .down { margin-top: 205px; }
.vscroll svg { margin-top: 8px; }
.notes { flex: 1; margin-top: 4px; border-top: 1px solid #8f939b; background: #fff; display: flex; padding-left: 12px; justify-content: space-between; font-size: 18px; line-height: 35px; color: #333; letter-spacing: -.55px; }
.notes-scroll { width: 18px; background: #e3e6ec; display: flex; flex-direction: column; align-items: center; justify-content: space-between; padding: 8px 0 8px; opacity: .7; }

.status { height: 24px; flex: none; display: flex; align-items: center; background: linear-gradient(#e6e7eb, #b8bbc2); border-top: 1px solid #8f939b; font-size: 12px; color: #43474e; letter-spacing: -.22px; }
.status > span { border-right: 1px solid #9a9da4; height: 23px; line-height: 22px; }
.s1 { width: 85px; padding-left: 9px; }
.s2 { width: 97px; padding-left: 10px; }
.s3 { width: 97px; padding-left: 9px; }
.views { margin-left: auto; width: 313px; border-left: 1px solid #9a9da4; display: flex; align-items: center; padding-left: 4px; }
.views .on { width: 21px; height: 21px; background: #fbdc82; border: 1px solid #cf9f3c; border-radius: 2px; display: flex; align-items: center; justify-content: center; margin-right: 4px; }
.views > svg { margin-right: 7px; }
.pct { margin: 0 9px 0 5px; width: 25px; }
.views .zoom { margin: 0; }
.taskbar { height: 45px; background: #0a2a47; }

/* chat popup floating over the editor */
.chat { position: absolute; left: 1493px; top: 118px; width: 292px; height: 321px; background: #fff; box-shadow: 0 1px 5px #666; display: flex; flex-direction: column; color: #222; }
.chat-head { height: 33px; display: flex; align-items: flex-start; padding-left: 121px; justify-content: space-between; padding-right: 6px; border-bottom: 1px solid #ddd; }
.chat-head span { font-size: 21.500px; line-height: 37px; font-family: "Open Sans", sans-serif; font-weight: 300; letter-spacing: -.1px; }
.chat-head button { width: 51px; height: 23px; background: #efefef; }
.log { height: 217px; overflow: hidden; position: relative; padding-left: 5px; border-bottom: 1px solid #999; line-height: 15.800px; font-size: 13.700px; letter-spacing: 0; }
.log p { margin: 0; }
.log p:first-child { margin-top: -7.500px; }
.log em { font-style: normal; color: #8fb036; letter-spacing: -.1px; }
.log-thumb { position: absolute; right: 5px; bottom: 6px; width: 5px; height: 40px; background: #4a4a4e; }
.entry { height: 46px; border-bottom: 1px solid #aaa; }
.to { flex: 1; display: flex; align-items: center; padding-left: 10px; letter-spacing: -.2px; color: #333; }
.to i { border: 4px solid transparent; border-left: 7px solid #000; border-right: 0; margin-right: 9px; }

/* playback overlay */
.controls { position: absolute; left: 0; right: 0; bottom: 0; height: 40px; padding-bottom: 1px; background: rgba(32, 36, 37, .8); display: flex; align-items: center; color: #fff; }
.time { margin-left: 27px; width: 54px; letter-spacing: -.1px; font-size: 14px; }
.seek { width: 1475px; height: 5px; background: #d2d1cd; border-radius: 2px; display: flex; align-items: center; }
.played { width: 908px; height: 5px; background: #e0784c; border-radius: 2px; }
.rest { margin-left: 6px; width: 58px; }
.dots { margin-left: 29px; }
.c-vol { margin-left: 29px; }
```
